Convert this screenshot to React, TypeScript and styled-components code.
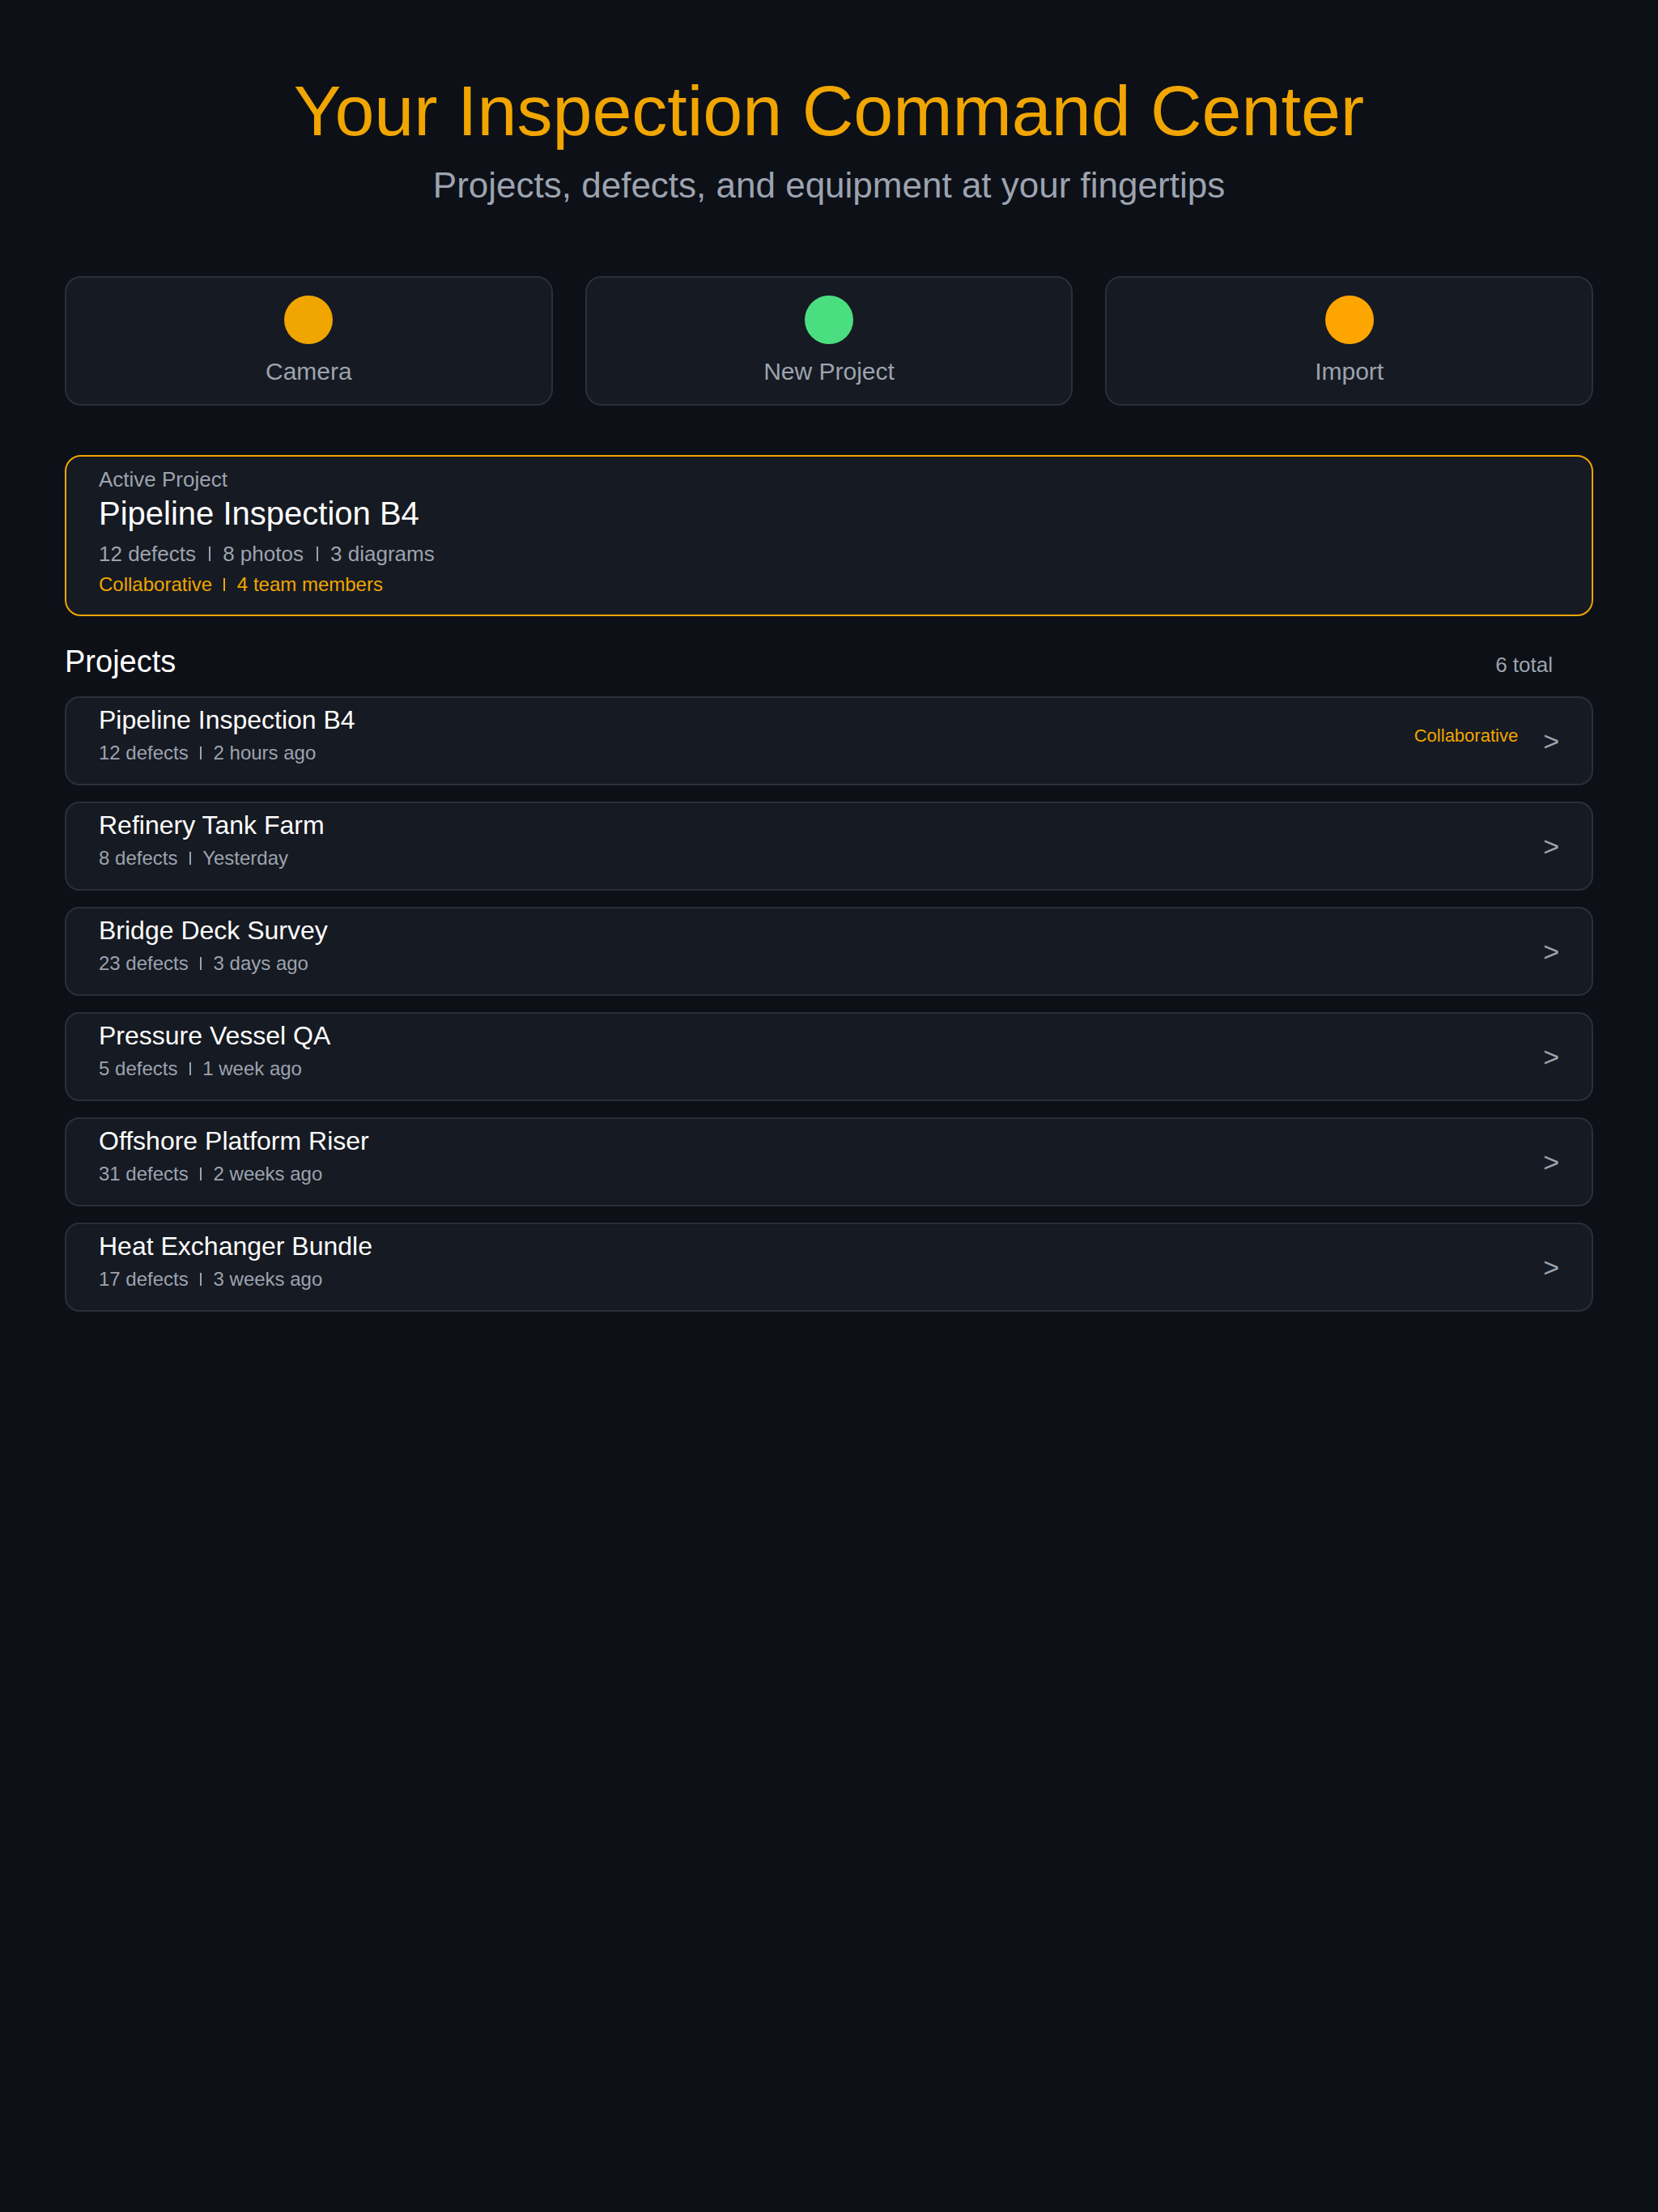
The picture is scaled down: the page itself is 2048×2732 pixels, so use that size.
import React from 'react'
import styled, { createGlobalStyle } from 'styled-components'

const GlobalStyle = createGlobalStyle`
  html, body {
    margin: 0;
    padding: 0;
    background-color: #0d1017;
  }

  body {
    font-family: 'Liberation Sans', Arial, sans-serif;
    min-height: 2732px;
  }

  * {
    box-sizing: border-box;
  }
`

const Page = styled.div`
  padding: 84px 80px 0;
  min-height: 2732px;
  background-color: #0d1017;
`

const Header = styled.header`
  text-align: center;
  margin-bottom: 86px;
`

const Title = styled.h1`
  margin: 0 0 13px;
  font-size: 88px;
  font-weight: 400;
  line-height: 1.2;
  color: #f0a500;
`

const Subtitle = styled.p`
  margin: 0;
  font-size: 44px;
  line-height: 1.2;
  color: #9ca3af;
`

const Actions = styled.div`
  display: grid;
  grid-template-columns: repeat(3, 1fr);
  gap: 40px;
  margin-bottom: 61px;
`

const ActionCard = styled.button`
  display: flex;
  flex-direction: column;
  align-items: center;
  gap: 16px;
  height: 160px;
  padding: 22px 0;
  background-color: #161a22;
  border: 2px solid #2a2f39;
  border-radius: 20px;
  font-family: inherit;
  cursor: pointer;
`

const Dot = styled.span<{ color: string }>`
  display: block;
  width: 60px;
  height: 60px;
  border-radius: 50%;
  background-color: ${p => p.color};
`

const ActionLabel = styled.span`
  font-size: 30px;
  line-height: 1.2;
  color: #9ca3af;
`

const ActiveCard = styled.section`
  padding: 13px 40px 22px;
  background-color: #161a22;
  border: 2px solid #f0a500;
  border-radius: 20px;
`

const ActiveLabel = styled.div`
  font-size: 26px;
  line-height: 1.2;
  color: #9ca3af;
`

const ActiveName = styled.div`
  margin-top: 1px;
  font-size: 40px;
  line-height: 1.2;
  color: #ffffff;
`

const Stats = styled.div`
  margin-top: 11px;
  font-size: 26px;
  line-height: 1.2;
  color: #9ca3af;
`

const Team = styled.div`
  margin-top: 8px;
  font-size: 24px;
  line-height: 1.2;
  color: #f0a500;
`

// thin divider between meta items
const Sep = styled.span`
  display: inline-block;
  width: 2px;
  height: 0.66em;
  margin: 0 0.6em;
  background-color: currentColor;
  vertical-align: baseline;
`

const SectionHeader = styled.div`
  display: flex;
  justify-content: space-between;
  align-items: baseline;
  margin: 34px 0 20px;
  padding-right: 50px;
`

const SectionTitle = styled.h2`
  margin: 0;
  font-size: 38px;
  font-weight: 400;
  line-height: 1.2;
  color: #ffffff;
`

const Count = styled.span`
  font-size: 26px;
  color: #9ca3af;
`

const List = styled.ul`
  display: flex;
  flex-direction: column;
  gap: 20px;
  margin: 0;
  padding: 0;
  list-style: none;
`

const Row = styled.li`
  display: flex;
  align-items: center;
  min-height: 110px;
  padding: 8px 40px;
  background-color: #161a22;
  border: 2px solid #2a2f39;
  border-radius: 18px;
  cursor: pointer;
`

const Info = styled.div`
  align-self: flex-start;
  flex: 1;
`

const RowTitle = styled.div`
  font-size: 32px;
  line-height: 1.2;
  color: #ffffff;
`

const RowMeta = styled.div`
  margin-top: 7px;
  font-size: 24px;
  line-height: 1.2;
  color: #9ca3af;
`

const RowSide = styled.div`
  display: flex;
  align-items: center;
  gap: 31px;
`

const Badge = styled.span`
  margin-bottom: 13px;
  font-size: 22px;
  color: #f0a500;
`

const Chevron = styled.span`
  font-size: 34px;
  line-height: 1;
  color: #9ca3af;
`

interface Project {
  id: number
  name: string
  defects: number
  updated: string
  collaborative?: boolean
}

const projects: Project[] = [
  { id: 1, name: 'Pipeline Inspection B4', defects: 12, updated: '2 hours ago', collaborative: true },
  { id: 2, name: 'Refinery Tank Farm', defects: 8, updated: 'Yesterday' },
  { id: 3, name: 'Bridge Deck Survey', defects: 23, updated: '3 days ago' },
  { id: 4, name: 'Pressure Vessel QA', defects: 5, updated: '1 week ago' },
  { id: 5, name: 'Offshore Platform Riser', defects: 31, updated: '2 weeks ago' },
  { id: 6, name: 'Heat Exchanger Bundle', defects: 17, updated: '3 weeks ago' },
]

const actions = [
  { label: 'Camera', color: '#f0a500' },
  { label: 'New Project', color: '#4ade80' },
  { label: 'Import', color: '#ffa500' },
]

const App: React.FC = () => {
  return (
    <Page>
      <GlobalStyle />
      <Header>
        <Title>Your Inspection Command Center</Title>
        <Subtitle>Projects, defects, and equipment at your fingertips</Subtitle>
      </Header>

      <Actions>
        {actions.map(action => (
          <ActionCard key={action.label}>
            <Dot color={action.color} />
            <ActionLabel>{action.label}</ActionLabel>
          </ActionCard>
        ))}
      </Actions>

      <ActiveCard>
        <ActiveLabel>Active Project</ActiveLabel>
        <ActiveName>Pipeline Inspection B4</ActiveName>
        <Stats>
          12 defects<Sep />8 photos<Sep />3 diagrams
        </Stats>
        <Team>
          Collaborative<Sep />4 team members
        </Team>
      </ActiveCard>

      <SectionHeader>
        <SectionTitle>Projects</SectionTitle>
        <Count>{projects.length} total</Count>
      </SectionHeader>

      <List>
        {projects.map(project => (
          <Row key={project.id}>
            <Info>
              <RowTitle>{project.name}</RowTitle>
              <RowMeta>
                {project.defects} defects<Sep />{project.updated}
              </RowMeta>
            </Info>
            <RowSide>
              {project.collaborative && <Badge>Collaborative</Badge>}
              <Chevron>&gt;</Chevron>
            </RowSide>
          </Row>
        ))}
      </List>
    </Page>
  )
}

export default App
